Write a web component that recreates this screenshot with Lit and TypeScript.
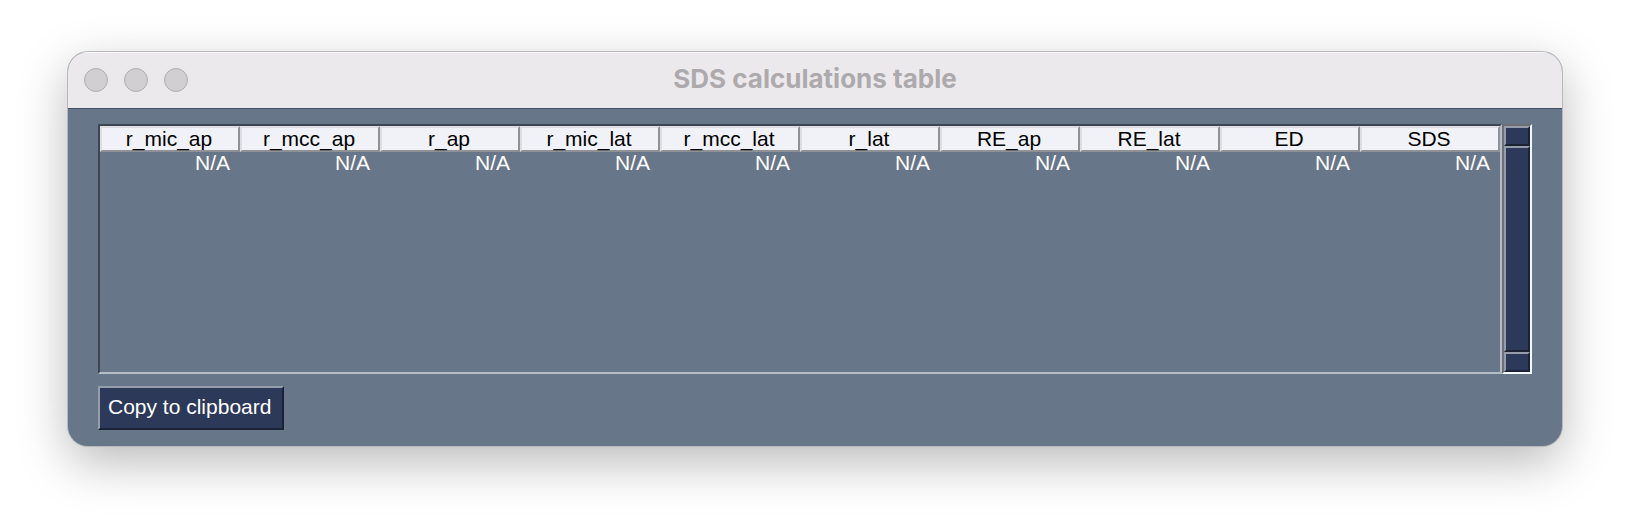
import { LitElement, html, css } from "lit";
import { customElement, state } from "lit/decorators.js";

@customElement("scroll-bar")
class ScrollBar extends LitElement {
  static styles = css`
    :host {
      display: flex;
      flex-direction: column;
      box-sizing: border-box;
      width: 30px;
      border: 2px solid;
      border-color: #6c7076 #f0faff #f0faff #6c7076;
    }
    .part {
      appearance: none;
      display: block;
      box-sizing: border-box;
      width: 100%;
      height: 20px;
      margin: 0;
      padding: 0;
      border: 2px solid;
      border-color: #959dad #1b2235 #1b2235 #959dad;
      border-radius: 0;
      background: #2c3959;
    }
    .thumb {
      flex: 1;
    }
  `;

  render() {
    return html`
      <button class="part" type="button" aria-label="Scroll up"></button>
      <div class="part thumb"></div>
      <button class="part" type="button" aria-label="Scroll down"></button>
    `;
  }
}

@customElement("app-root")
class AppRoot extends LitElement {
  @state() private columns = [
    "r_mic_ap",
    "r_mcc_ap",
    "r_ap",
    "r_mic_lat",
    "r_mcc_lat",
    "r_lat",
    "RE_ap",
    "RE_lat",
    "ED",
    "SDS",
  ];

  @state() private rows = [this.columns.map(() => "N/A")];

  static styles = css`
    :host {
      display: block;
      box-sizing: border-box;
      min-height: 100vh;
      padding: 52px 68px 84px;
      background: #fff;
      font-family: "Liberation Sans", Arial, sans-serif;
      font-size: 21px;
      line-height: 22px;
    }
    .window {
      overflow: hidden;
      border-radius: 20px;
      background: #68768a;
      box-shadow:
        0 0 0 1px #b8b8b8,
        0 16px 50px rgba(0, 0, 0, 0.28);
    }
    .titlebar {
      display: grid;
      grid-template-columns: 1fr auto 1fr;
      align-items: center;
      height: 56px;
      padding: 0 16px;
      background: #ece9ec;
      border-bottom: 1px solid #3f4e68;
      box-shadow: inset 0 1px #f8f8f8;
    }
    .lights {
      display: flex;
      gap: 16px;
    }
    .light {
      box-sizing: border-box;
      width: 24px;
      height: 24px;
      padding: 0;
      border: 1px solid #b0aeb0;
      border-radius: 50%;
      background: #d1cfd1;
    }
    .title {
      margin: 0;
      color: #acaaad;
      padding-bottom: 2px;
      font: 700 26px/32px Inter, sans-serif;
    }
    .content {
      padding: 15px 30px 16px;
    }
    .pane {
      display: flex;
      height: 250px;
      margin-bottom: 12px;
    }
    .frame {
      flex: 1;
      box-sizing: border-box;
      border: 2px solid;
      border-color: #3e4553 #b4bcc7 #b4bcc7 #3e4553;
    }
    .grid {
      width: 100%;
      table-layout: fixed;
      border-collapse: separate;
      border-spacing: 0;
    }
    .head {
      padding: 0 2px 0 0;
      border: 2px solid;
      border-color: #dcdee2 #909194 #909194 #dcdee2;
      background: #f0f2f7;
      color: #000;
      font-weight: 400;
      text-align: center;
    }
    .cell {
      padding: 0 10px;
      color: #fff;
      text-align: right;
    }
    .copy {
      display: block;
      padding: 8px 11px 10px 8px;
      border: 2px solid;
      border-color: #959dad #1b2235 #1b2235 #959dad;
      border-radius: 0;
      background: #2c3959;
      color: #fff;
      font: inherit;
    }
  `;

  private copy() {
    const lines = [this.columns, ...this.rows].map((r) => r.join("\t"));
    navigator.clipboard?.writeText(lines.join("\n"));
  }

  render() {
    return html`
      <main class="window">
        <header class="titlebar">
          <div class="lights">
            <button class="light" type="button" aria-label="Close"></button>
            <button class="light" type="button" aria-label="Minimize"></button>
            <button class="light" type="button" aria-label="Zoom"></button>
          </div>
          <h1 class="title">SDS calculations table</h1>
        </header>
        <div class="content">
          <div class="pane">
            <div class="frame">
              <table class="grid">
                <thead>
                  <tr>
                    ${this.columns.map((c) => html`<th class="head" scope="col">${c}</th>`)}
                  </tr>
                </thead>
                <tbody>
                  ${this.rows.map(
                    (r) => html`<tr>${r.map((v) => html`<td class="cell">${v}</td>`)}</tr>`
                  )}
                </tbody>
              </table>
            </div>
            <scroll-bar></scroll-bar>
          </div>
          <button class="copy" type="button" @click=${this.copy}>Copy to clipboard</button>
        </div>
      </main>
    `;
  }
}
